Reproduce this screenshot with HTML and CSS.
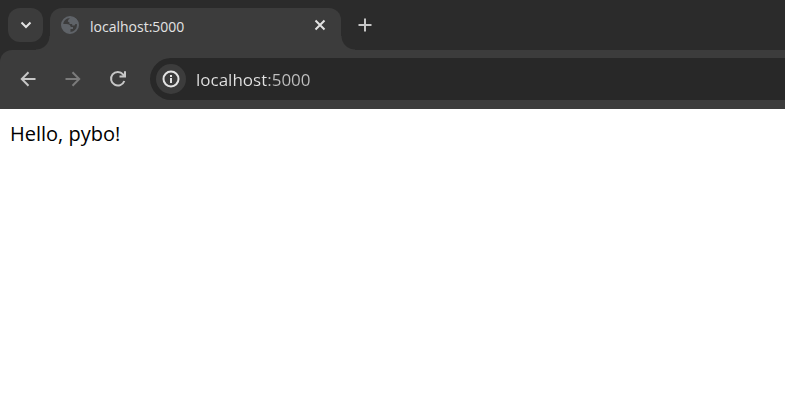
FILE: index.html
```html
<!DOCTYPE html>
<html lang="en">
<head>
    <meta charset="UTF-8">
    <meta name="viewport" content="width=device-width, initial-scale=1.0">
    <title>localhost:5000</title>
    <link rel="stylesheet" href="styles.css">
</head>
<body>
    <header class="browser">
        <div class="tab-strip">
            <button type="button" class="tab-search" aria-label="Search tabs">
                <svg width="12" height="8" viewBox="0 0 12 8"><path d="M1.500 1.500 6 6l4.500-4.500"/></svg>
            </button>
            <div class="tab">
                <svg class="globe" width="20" height="20" viewBox="0 0 20 20">
                    <circle cx="10" cy="10" r="8"/>
                    <path d="M12 2.200C9.500 2.500 8.300 4.500 7.800 6.500L9.500 7.500V9H12.200V10.500H14.500L15.500 9H18V7C17 4 15 2.200 12 2.200ZM2 9H6.500C8.800 9 10.500 10 10.800 12H13V14H10.500V17.800C5.500 18.500 1.500 14 2 9Z"/>
                </svg>
                <span class="tab-title">localhost:5000</span>
                <button type="button" class="tab-close" aria-label="Close tab">
                    <svg width="12" height="12" viewBox="0 0 12 12"><path d="m1.500 1.500 9 9m0-9-9 9"/></svg>
                </button>
            </div>
            <button type="button" class="new-tab" aria-label="New tab">
                <svg width="14" height="14" viewBox="0 0 14 14"><path d="M7 .5v13M.5 7h13"/></svg>
            </button>
        </div>
        <div class="toolbar">
            <button type="button" class="nav" aria-label="Back">
                <svg width="16" height="16" viewBox="0 0 16 16"><path d="M15.500 8H2M8.500 1.300 1.800 8l6.700 6.700"/></svg>
            </button>
            <button type="button" class="nav forward" aria-label="Forward" disabled>
                <svg width="16" height="16" viewBox="0 0 16 16"><path d="M.5 8H14M7.500 1.300 14.200 8l-6.700 6.700"/></svg>
            </button>
            <button type="button" class="nav" aria-label="Reload">
                <svg width="18" height="18" viewBox="0 0 18 18"><path d="M15.300 11A6.800 6.800 0 1 1 14 4.300L15.500 6M16 1.200v5.300h-5.500"/></svg>
            </button>
            <div class="omnibox">
                <button type="button" class="site-info" aria-label="View site information">
                    <svg width="18" height="18" viewBox="0 0 18 18"><circle cx="9" cy="9" r="7.500"/><path d="M9 8v5M9 5v2"/></svg>
                </button>
                <input type="text" class="address" aria-label="Address" value="localhost:5000" spellcheck="false">
            </div>
        </div>
    </header>
    <main class="page">Hello, pybo!</main>
</body>
</html>
```
FILE: styles.css
```css
* {
    box-sizing: border-box;
}

body {
    margin: 0;
    background: #fff;
    font-family: "Open Sans", "Noto Sans", sans-serif;
}

button {
    display: flex;
    align-items: center;
    justify-content: center;
    flex: none;
    padding: 0;
    border: 0;
    background: none;
    color: #c7c7c7;
}

svg {
    fill: none;
    stroke: currentColor;
    stroke-width: 2;
}

.browser {
    background: #2b2b2b;
}

.tab-strip {
    display: flex;
    height: 50px;
    padding: 8px 8px 0;
}

.tab-search {
    width: 35px;
    height: 34px;
    margin-right: 7px;
    border-radius: 12px;
    background: #3c3c3c;
    color: #e3e3e3;
}

.tab {
    position: relative;
    display: flex;
    align-items: center;
    width: 291px;
    height: 42px;
    padding: 0 11px 8px 10px;
    border-radius: 12px 12px 0 0;
    background: #3c3c3c;
    color: #e3e3e3;
}

/* curved feet where the tab meets the toolbar */
.tab::before,
.tab::after {
    content: "";
    position: absolute;
    bottom: 0;
    width: 14px;
    height: 14px;
}

.tab::before {
    right: 100%;
    background: radial-gradient(circle at 0 0, transparent 13px, #3c3c3c 14px);
}

.tab::after {
    left: 100%;
    background: radial-gradient(circle at 100% 0, transparent 13px, #3c3c3c 14px);
}

.globe {
    color: #5f6368;
}

.globe path {
    fill: currentColor;
    stroke: none;
}

.tab-title {
    flex: 1;
    margin-left: 10px;
    padding-top: 4px;
    font-size: 14px;
    line-height: 20px;
}

.tab-close {
    width: 20px;
    height: 20px;
    color: #e3e3e3;
}

.new-tab {
    width: 34px;
    height: 34px;
    margin-left: 7px;
}

.toolbar {
    display: flex;
    align-items: center;
    height: 59px;
    padding: 0 0 1px 10px;
    border-top-left-radius: 12px;
    background: #3c3c3c;
}

.nav {
    width: 35px;
    height: 35px;
    margin-right: 10px;
}

.forward {
    color: #7b7b7b;
}

.omnibox {
    display: flex;
    align-items: center;
    flex: 1;
    height: 42px;
    margin-left: 5px;
    padding-left: 6px;
    border-radius: 21px 0 0 21px;
    background: #282828;
}

.site-info {
    width: 30px;
    height: 30px;
    border-radius: 50%;
    background: #3c3c3c;
    color: #e3e3e3;
}

/* host is brighter than the port */
.address {
    flex: 1;
    min-width: 0;
    height: 30px;
    margin-left: 10px;
    padding: 0;
    border: 0;
    outline: 0;
    background: linear-gradient(90deg, #e3e3e3 70px, #c0c0c0 70px);
    -webkit-background-clip: text;
    background-clip: text;
    color: transparent;
    caret-color: #e3e3e3;
    font-family: inherit;
    font-size: 17px;
}

.page {
    padding: 10px;
    color: #000;
    font-size: 20px;
    line-height: 30px;
}
```
